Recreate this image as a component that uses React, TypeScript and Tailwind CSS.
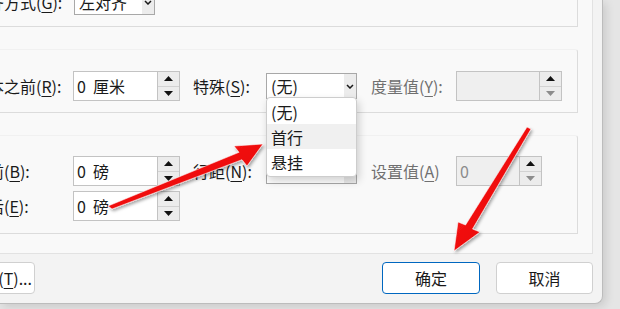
import React from 'react';

const U = ({ children }: { children: React.ReactNode }) => (
  <span className="underline decoration-1 underline-offset-[3px]">{children}</span>
);

const Tri = ({ up, color }: { up?: boolean; color: string }) => (
  <svg width="9" height="5" viewBox="0 0 9 5">
    <polygon points={up ? '0,5 4.5,0 9,5' : '0,0 9,0 4.5,5'} fill={color} />
  </svg>
);

const Chevron = () => (
  <svg width="8" height="5" viewBox="0 0 8 5">
    <path d="M1 1 L4 4 L7 1" fill="none" stroke="#1a1a1a" strokeWidth="1.5" />
  </svg>
);

function SpinBox({ value, width, disabled }: { value: string; width: string; disabled?: boolean }) {
  return (
    <div className={`flex h-[30px] shrink-0 border border-[#c3c3c3] ${width} ${disabled ? 'bg-[#efefef]' : 'bg-white'}`}>
      <div className={`flex flex-1 items-center whitespace-pre pl-[3px] text-[16px] leading-none ${disabled ? 'text-[#8a8a8a]' : 'text-[#1a1a1a]'}`}>
        {value}
      </div>
      <div className="flex w-[22px] flex-col border-l border-[#c3c3c3] bg-[#ececec]">
        <div className="flex flex-1 items-center justify-center border-b border-[#d2d2d2]">
          <Tri up color="#111111" />
        </div>
        <div className="flex flex-1 items-center justify-center">
          <Tri color={disabled ? '#8c8c8c' : '#111111'} />
        </div>
      </div>
    </div>
  );
}

function Select({ value, width }: { value: string; width: string }) {
  return (
    <div className={`flex h-[26px] shrink-0 border border-[#a8a8a8] bg-white ${width}`}>
      <div className="flex flex-1 items-center overflow-hidden whitespace-nowrap pl-[4px] text-[16px] leading-none">{value}</div>
      <div className="flex w-[12px] items-center justify-center bg-[#ececec]">
        <Chevron />
      </div>
    </div>
  );
}

const Label = ({ children, width, muted }: { children: React.ReactNode; width: string; muted?: boolean }) => (
  <div className={`shrink-0 whitespace-nowrap text-[16px] leading-none ${width} ${muted ? 'text-[#707070]' : 'text-[#1a1a1a]'}`}>
    {children}
  </div>
);

export default function App() {
  return (
    <div className="relative h-[309px] w-[620px] overflow-hidden bg-[#e5e5e5] font-['Noto_Sans_CJK_SC',sans-serif] text-[#1a1a1a]">
      <div className="flex h-[304px] w-[603px] flex-col overflow-hidden rounded-br-[8px] border-r border-b border-[#bcbcbc] bg-[#f3f3f3] shadow-[3px_3px_10px_rgba(0,0,0,0.12)]">
        {/* tab page */}
        <div className="flex h-[254px] w-[593px] shrink-0 flex-col border-r border-b border-[#e2e2e2] bg-[#f9f9f9]">
          {/* alignment group (cut off at top) */}
          <div className="-ml-[40px] h-[27px] w-[618px] shrink-0 border-r border-b border-[#dcdcdc] pl-[12px]">
            <div className="-mt-[11px] flex h-[26px] items-center">
              <Label width="w-[102px]">
                对齐方式(<U>G</U>):
              </Label>
              <Select value="左对齐" width="w-[81px]" />
            </div>
          </div>

          {/* indent group */}
          <div className="-ml-[40px] mt-[22px] w-[618px] shrink-0 rounded-tr-[3px] border-t border-r border-b border-[#dcdcdc] border-t-[#f1f1f1] pt-[21px] pb-[11px] pl-[12px]">
            <div className="flex h-[30px] items-center">
              <Label width="w-[101px]">
                文本之前(<U>R</U>):
              </Label>
              <SpinBox value="0  厘米" width="w-[107px]" />
              <Label width="ml-[13px] w-[73px]">
                特殊(<U>S</U>):
              </Label>
              <Select value="(无)" width="w-[91px]" />
              <Label width="ml-[14px] w-[85px]" muted>
                度量值(<U>Y</U>):
              </Label>
              <SpinBox value="" width="w-[106px]" disabled />
            </div>
          </div>

          {/* spacing group */}
          <div className="-ml-[40px] mt-[22px] flex w-[618px] shrink-0 flex-col gap-[5px] rounded-tr-[3px] border-t border-r border-b border-[#dcdcdc] border-t-[#f1f1f1] pt-[20px] pb-[12px] pl-[12px]">
            <div className="flex h-[30px] items-center">
              <Label width="w-[101px]">
                段前(<U>B</U>):
              </Label>
              <SpinBox value="0  磅" width="w-[107px]" />
              <Label width="ml-[13px] w-[73px]">
                行距(<U>N</U>):
              </Label>
              <Select value="" width="w-[91px]" />
              <Label width="ml-[14px] w-[85px]" muted>
                设置值(<U>A</U>)
              </Label>
              <SpinBox value="0" width="w-[86px]" disabled />
            </div>
            <div className="flex h-[30px] items-center">
              <Label width="w-[101px]">
                段后(<U>E</U>):
              </Label>
              <SpinBox value="0  磅" width="w-[107px]" />
            </div>
          </div>
        </div>

        {/* footer buttons */}
        <div className="flex flex-1 items-start gap-[16px] pt-[8px] pr-[9px]">
          <button className="-ml-[65px] flex h-[32px] w-[100px] shrink-0 items-center justify-end rounded-[4px] border border-[#d0d0d0] bg-white pr-[2px] text-[16px] leading-none whitespace-nowrap">
            制表位(<U>T</U>)...
          </button>
          <div className="flex-1" />
          <button className="flex h-[32px] w-[98px] items-center justify-center rounded-[4px] border border-[#0067c0] bg-white text-[16px] leading-none">
            确定
          </button>
          <button className="flex h-[32px] w-[97px] items-center justify-center rounded-[4px] border border-[#d0d0d0] bg-white text-[16px] leading-none">
            取消
          </button>
        </div>
      </div>

      {/* open dropdown list */}
      <div className="absolute top-[97px] left-[266px] flex h-[80px] w-[91px] flex-col rounded-[4px] border border-[#cdcdcd] bg-white pt-[1px] shadow-[2px_4px_8px_rgba(0,0,0,0.18)]">
        <div className="flex h-[25px] items-center pl-[4px] text-[16px] leading-none">(无)</div>
        <div className="flex h-[25px] items-center bg-[#f0f0f0] pl-[4px] text-[16px] leading-none">首行</div>
        <div className="flex h-[25px] items-center pl-[4px] text-[16px] leading-none">悬挂</div>
      </div>

      {/* red annotation arrows */}
      <svg className="pointer-events-none absolute inset-0" width="620" height="309" viewBox="0 0 620 309">
        <defs>
          <linearGradient id="red" x1="0" y1="0" x2="1" y2="1">
            <stop offset="0" stopColor="#ff2020" />
            <stop offset="1" stopColor="#e00000" />
          </linearGradient>
          <filter id="sh" x="-20%" y="-20%" width="140%" height="140%">
            <feDropShadow dx="1.5" dy="2" stdDeviation="1.6" floodColor="#000" floodOpacity="0.35" />
          </filter>
        </defs>
        <polygon
          points="108,206 239,152.3 234,146 263,144 247,166 242,159.7 112,209"
          fill="url(#red)"
          stroke="#ffffff"
          strokeOpacity="0.7"
          strokeWidth="0.8"
          strokeLinejoin="round"
          filter="url(#sh)"
        />
        <polygon
          points="527,127 465.5,225 458,222 454,251 480,232 472.5,229 531,129"
          fill="url(#red)"
          stroke="#ffffff"
          strokeOpacity="0.7"
          strokeWidth="0.8"
          strokeLinejoin="round"
          filter="url(#sh)"
        />
      </svg>
    </div>
  );
}
